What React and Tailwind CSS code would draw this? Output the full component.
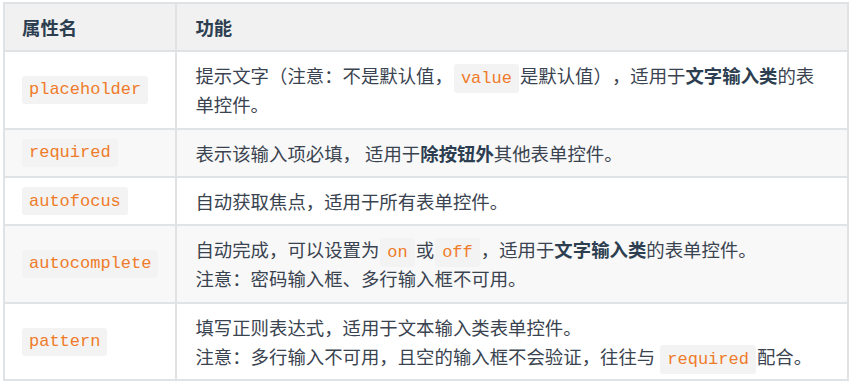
const Code = ({ children, block }) => (
  <code
    className={
      block
        ? "inline-block align-middle font-['Liberation_Mono',monospace] text-[17px] leading-[17px] text-[#ef7b2a] bg-[#f3f3f3] px-[7px] py-[5.5px] rounded-[3px]"
        : "font-['Liberation_Mono',monospace] text-[17px] leading-none text-[#ef7b2a] bg-[#f3f3f3] mx-[1px] px-[7px] py-[5px] rounded-[3px]"
    }
  >
    {children}
  </code>
);

const Strong = ({ children }) => (
  <b className="font-bold text-[#2c3e50]">{children}</b>
);

const rows = [
  {
    name: "placeholder",
    lines: [
      <>
        提示文字（注意：不是默认值，<Code>value</Code>是默认值），适用于
        <Strong>文字输入类</Strong>的表
      </>,
      <>单控件。</>,
    ],
  },
  {
    name: "required",
    lines: [
      <>
        表示该输入项必填， 适用于<Strong>除按钮外</Strong>其他表单控件。
      </>,
    ],
  },
  {
    name: "autofocus",
    lines: [<>自动获取焦点，适用于所有表单控件。</>],
  },
  {
    name: "autocomplete",
    lines: [
      <>
        自动完成，可以设置为<Code>on</Code>或<Code>off</Code>，适用于
        <Strong>文字输入类</Strong>的表单控件。
      </>,
      <>注意：密码输入框、多行输入框不可用。</>,
    ],
  },
  {
    name: "pattern",
    lines: [
      <>填写正则表达式，适用于文本输入类表单控件。</>,
      <>
        注意：多行输入不可用，且空的输入框不会验证，往往与 <Code>required</Code>配合。
      </>,
    ],
  },
];

export default function App() {
  return (
    <div className="bg-white w-[851px] h-[383px] pl-[3px] pt-[2px] font-['Noto_Sans_CJK_SC','Noto_Sans',sans-serif] text-[18.4px] text-[#3a4350] [text-spacing-trim:space-all]">
      <table className="border-collapse w-[846px]">
        <thead>
          <tr className="bg-[#f1f1f1]">
            <th className="w-[171px] border-2 border-[#e0e3e6] text-left font-bold text-[#2c3e50] px-[17px] py-[9px] leading-[28px]">
              属性名
            </th>
            <th className="border-2 border-[#e0e3e6] text-left font-bold text-[#2c3e50] px-[18px] py-[9px] leading-[28px]">
              功能
            </th>
          </tr>
        </thead>
        <tbody>
          {rows.map((r, i) => (
            <tr key={r.name} className={i % 2 === 1 ? "bg-[#f8f8f8]" : "bg-white"}>
              <td className="border-2 border-[#e0e3e6] px-[17px] py-[8px] align-middle leading-none">
                <Code block>{r.name}</Code>
              </td>
              <td className="border-2 border-[#e0e3e6] px-[18px] pt-[9px] pb-[8px] align-middle whitespace-nowrap">
                {r.lines.map((line, j) => (
                  <div key={j} className="h-[29.3px] leading-[29px]">
                    {line}
                  </div>
                ))}
              </td>
            </tr>
          ))}
        </tbody>
      </table>
    </div>
  );
}
